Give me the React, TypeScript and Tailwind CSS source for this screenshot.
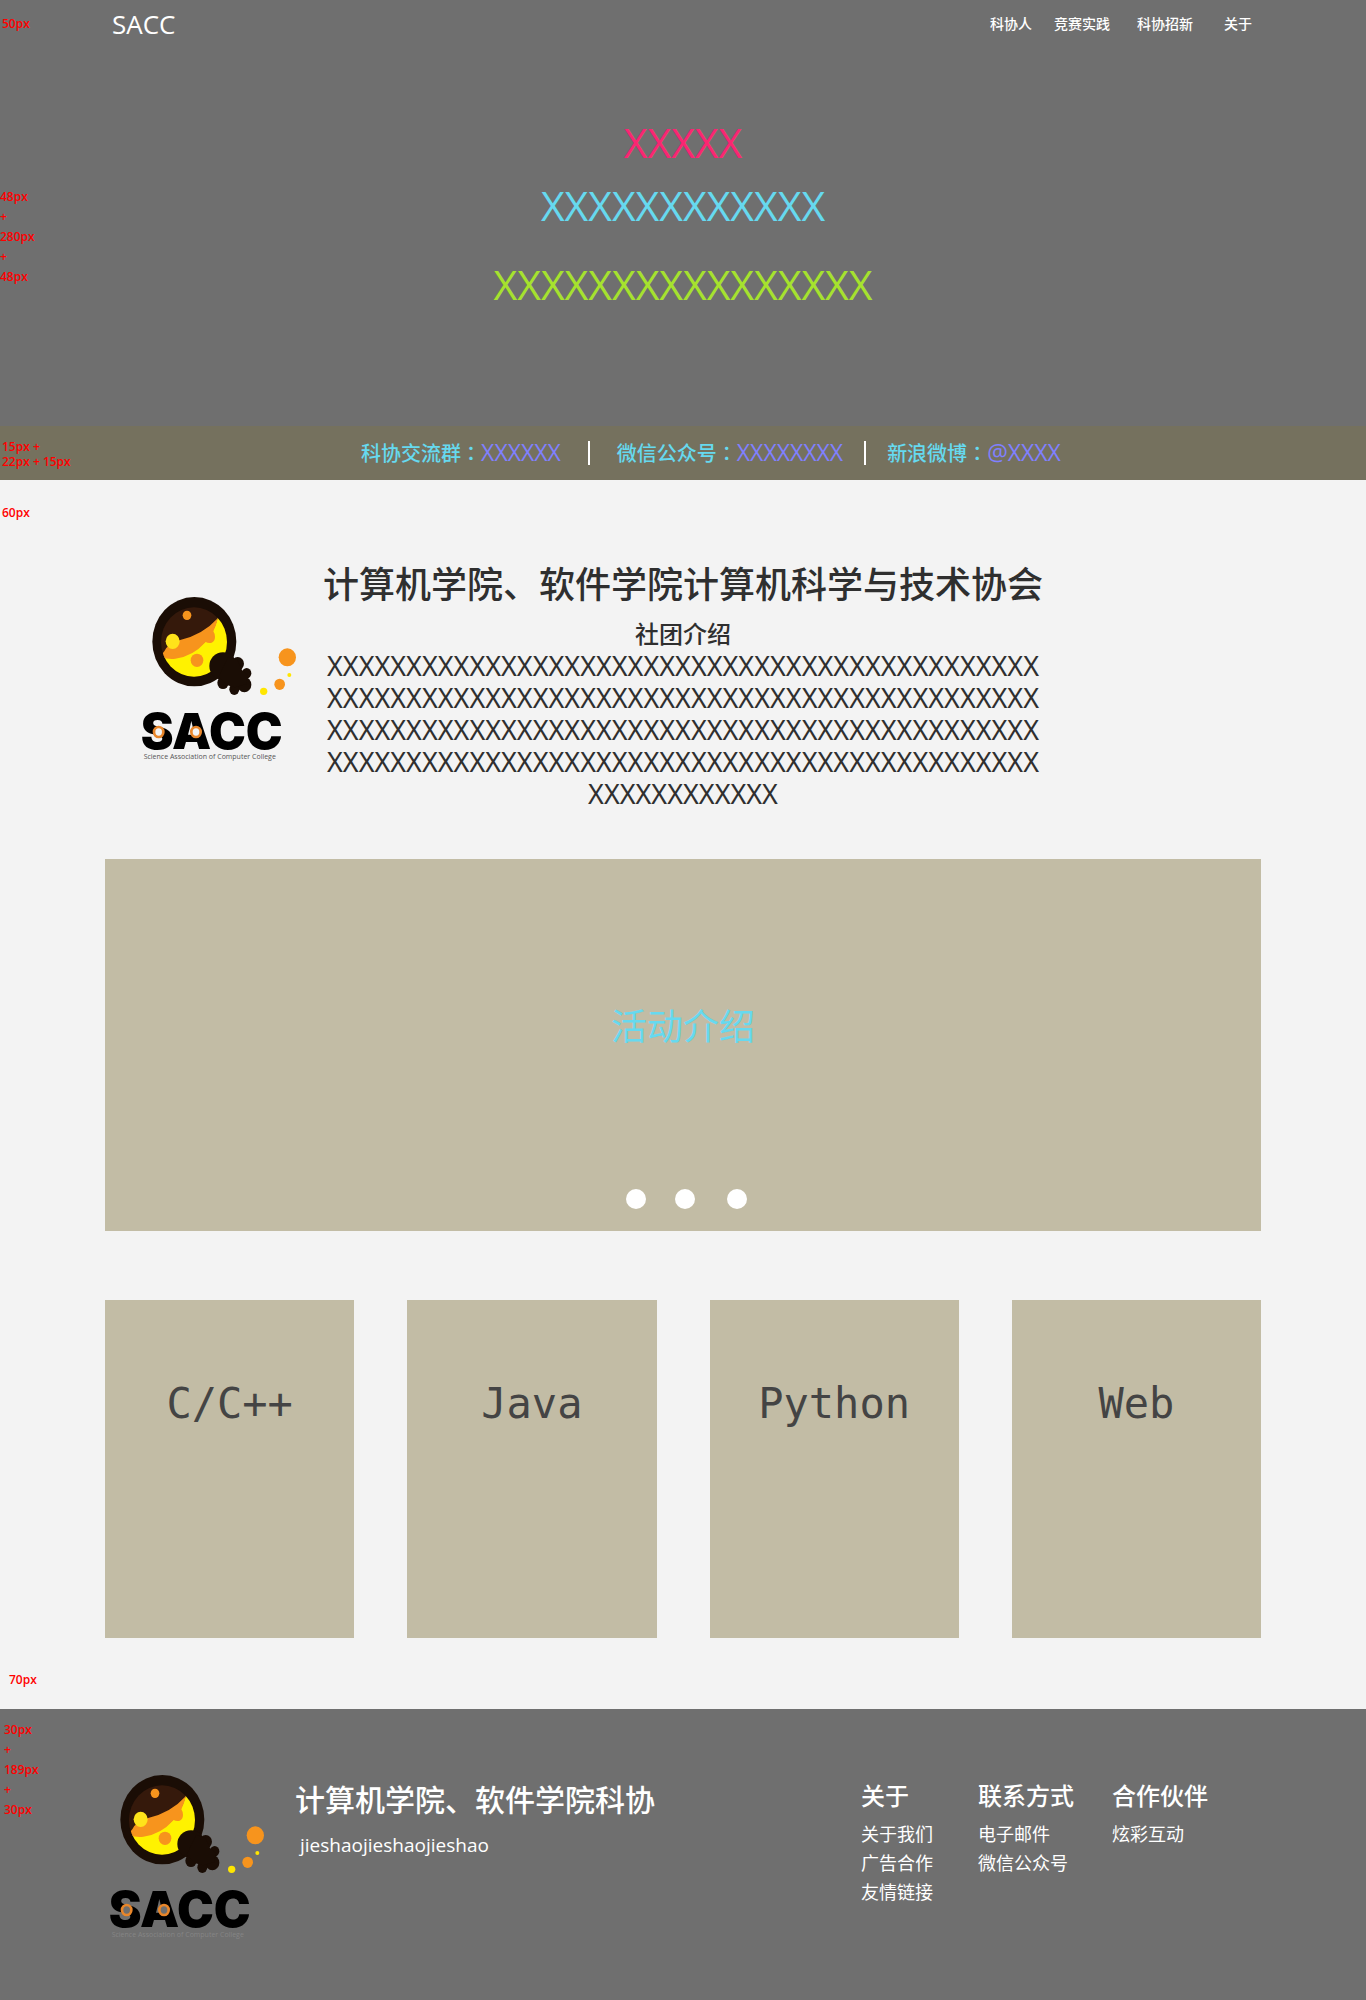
import type { ReactNode } from "react";

const navLinks = [
  { label: "科协人", gap: "" },
  { label: "竞赛实践", gap: "ml-[22px]" },
  { label: "科协招新", gap: "ml-[27px]" },
  { label: "关于", gap: "ml-[31px]" },
];

const languages = ["C/C++", "Java", "Python", "Web"];

const footerColumns = [
  { title: "关于", links: ["关于我们", "广告合作", "友情链接"], gap: "mr-[45px]" },
  { title: "联系方式", links: ["电子邮件", "微信公众号"], gap: "mr-[38px]" },
  { title: "合作伙伴", links: ["炫彩互动"], gap: "" },
];

/* Red spacing annotation laid over the left edge of a section. */
function Note({ place, children }: { place: string; children: ReactNode }) {
  return (
    <div className={`absolute text-[12px] font-semibold whitespace-pre text-[#ff0000] ${place}`}>
      {children}
    </div>
  );
}

function Logo({
  id,
  className,
  tagline,
  hole,
}: {
  id: string;
  className: string;
  tagline: string;
  hole: string;
}) {
  return (
    <svg viewBox="60 105 474 504" className={`h-[168px] w-[158px] shrink-0 ${className}`} role="img" aria-label="SACC">
      <defs>
        <clipPath id={id}>
          <ellipse cx="222" cy="246" rx="99" ry="104" />
        </clipPath>
      </defs>
      <ellipse cx="223" cy="245" rx="126" ry="134" fill="#1a0d05" />
      <g clipPath={`url(#${id})`}>
        <rect x="120" y="140" width="210" height="215" fill="#35190b" />
        <path d="M293 175 L340 175 V360 H120 V290 H166 Q218 285 258 243 Q280 220 293 175 Z" fill="#fff200" />
        <path
          d="M294 174 Q248 225 178 241 Q140 256 134 272 L120 290 Q145 299 166 296 Q218 290 257 246 Q266 251 275 248 Q285 243 285 230 Q285 222 280 214 Q289 196 294 174 Z"
          fill="#f7941d"
        />
      </g>
      <ellipse cx="201" cy="166" rx="13" ry="14" fill="#f7941d" />
      <ellipse cx="158" cy="244" rx="21" ry="23" fill="#ffe31a" />
      <ellipse cx="231" cy="301" rx="19" ry="20" fill="#f7941d" />
      <g fill="#1a0d05">
        <ellipse cx="309" cy="318" rx="41" ry="41" />
        <ellipse cx="353" cy="311" rx="19" ry="20" />
        <ellipse cx="380" cy="340" rx="14" ry="16" />
        <ellipse cx="373" cy="374" rx="21" ry="23" />
        <ellipse cx="343" cy="388" rx="15" ry="17" />
        <ellipse cx="309" cy="368" rx="17" ry="19" />
        <path d="M325 290 L352 300 L366 330 L382 345 L380 372 L345 382 L322 376 L296 350 Z" />
      </g>
      <ellipse cx="502" cy="292" rx="26" ry="27" fill="#f7941d" />
      <circle cx="508" cy="345" r="6" fill="#ffe600" />
      <ellipse cx="479" cy="373" rx="16" ry="17" fill="#f7941d" />
      <circle cx="431" cy="394" r="11" fill="#ffe600" />
      <text x="62" y="567" fill="#000" className="font-['Inter',sans-serif] text-[148px] font-black">
        SACC
      </text>
      <g stroke="#e8862a" strokeWidth="8" className={hole}>
        <ellipse cx="116" cy="516" rx="14" ry="15" />
        <ellipse cx="228" cy="516" rx="14" ry="15" />
      </g>
      <text x="71" y="597" className={`font-['Open_Sans',sans-serif] text-[21px] ${tagline}`}>
        Science Association of Computer College
      </text>
    </svg>
  );
}

function Contact({ label, value }: { label: string; value: string }) {
  return (
    <div className="flex items-baseline leading-[28px] font-medium">
      <span className="text-[20px] text-[#66d9ef]">
        {label}
        <span className="font-['Noto_Sans_CJK_TC',sans-serif]">：</span>
      </span>
      <span className="text-[23px] text-[#8080ff]">{value}</span>
    </div>
  );
}

export default function App() {
  return (
    <div className="min-h-screen bg-[#f3f3f3] font-['Open_Sans','Noto_Sans_CJK_SC',sans-serif]">
      <header className="relative bg-[#6f6f6f] pb-[118px]">
        <Note place="left-[2px] top-[14px] leading-[20px]">50px</Note>
        <Note place="left-0 top-[187px] leading-[20px]">{"48px\n+\n280px\n+\n48px"}</Note>
        <div className="mx-auto flex h-[48px] max-w-[1156px] items-center justify-between pr-[9px] pl-[7px] text-white">
          <a href="#top" className="text-[26px] leading-[36px] font-medium">
            SACC
          </a>
          <nav className="flex text-[14px] leading-[20px] font-medium">
            {navLinks.map((link) => (
              <a key={link.label} href="#top" className={link.gap}>
                {link.label}
              </a>
            ))}
          </nav>
        </div>
        <div className="pt-[70px] text-center text-[41px] leading-[48px] font-medium">
          <p className="text-[#f92672]">XXXXX</p>
          <p className="mt-[15px] text-[#66d9ef]">XXXXXXXXXXXX</p>
          <p className="mt-[31px] text-[#a6e22e]">XXXXXXXXXXXXXXXX</p>
        </div>
      </header>

      <section className="relative bg-[#75715e]">
        <Note place="left-[2px] top-[13px] leading-[15px]">{"15px +\n22px + 15px"}</Note>
        <div className="flex h-[54px] items-center justify-center pl-[56px]">
          <Contact label="科协交流群" value="XXXXXX" />
          <span className="mx-[27px] h-[24px] w-[2px] bg-white" />
          <Contact label="微信公众号" value="XXXXXXXX" />
          <span className="mx-[21px] h-[24px] w-[2px] bg-white" />
          <Contact label="新浪微博" value="@XXXX" />
        </div>
      </section>

      <main className="relative pb-[71px]">
        <Note place="left-[2px] top-[23px] leading-[20px]">60px</Note>
        <Note place="bottom-[19px] left-[9px] leading-[20px]">70px</Note>
        <div className="mx-auto max-w-[1156px]">
          <section className="grid grid-cols-[1fr_720px_1fr] pb-[49px]">
            <Logo id="bulb-intro" className="mt-[115px] ml-[35px]" tagline="fill-[#555555]" hole="fill-[#f3f3f3]" />
            <div className="pt-[81px] text-center text-[#2f2f2f]">
              <h1 className="text-[36px] leading-[48px] font-medium whitespace-nowrap">
                计算机学院、软件学院计算机科学与技术协会
              </h1>
              <h2 className="mt-[9px] text-[24px] leading-[32px] font-medium">社团介绍</h2>
              <p className="font-['Noto_Sans',sans-serif] text-[27px] leading-[32px] break-all">
                {"X".repeat(192)}
              </p>
            </div>
          </section>

          <section className="bg-[#c2bca5] pt-[144px] pb-[22px]">
            <h2 className="text-center text-[36px] leading-[48px] text-[#66d9ef]">活动介绍</h2>
            <div className="mt-[138px] flex justify-center pl-[7px]">
              <button aria-label="1" className="size-[20px] rounded-full bg-white" />
              <button aria-label="2" className="ml-[29px] size-[20px] rounded-full bg-white" />
              <button aria-label="3" className="ml-[32px] size-[20px] rounded-full bg-white" />
            </div>
          </section>

          <section className="mt-[69px] grid grid-cols-4 gap-[53px]">
            {languages.map((name) => (
              <article key={name} className="min-h-[338px] bg-[#c2bca5] pt-[76px] text-center">
                <h3 className="font-['DejaVu_Sans_Mono',monospace] text-[42px] leading-[56px] text-[#444444]">
                  {name}
                </h3>
              </article>
            ))}
          </section>
        </div>
      </main>

      <footer className="relative bg-[#6f6f6f] pb-[59px] text-white">
        <Note place="left-[4px] top-[11px] leading-[20px]">{"30px\n+\n189px\n+\n30px"}</Note>
        <div className="mx-auto flex max-w-[1156px] justify-between pt-[64px] pr-[53px] pl-[3px]">
          <div className="flex">
            <Logo id="bulb-footer" className="" tagline="fill-[#858585]" hole="fill-[#6f6f6f]" />
            <div className="ml-[29px] pt-[3px]">
              <p className="text-[30px] leading-[48px] font-medium">计算机学院、软件学院科协</p>
              <p className="mt-[7px] ml-[5px] text-[19px] leading-[28px]">jieshaojieshaojieshao</p>
            </div>
          </div>
          <div className="flex pt-[5px]">
            {footerColumns.map((column) => (
              <div key={column.title} className={column.gap}>
                <h4 className="text-[24px] leading-[36px] font-medium">{column.title}</h4>
                <ul className="mt-[6px] text-[18px] leading-[29px]">
                  {column.links.map((link) => (
                    <li key={link}>
                      <a href="#top">{link}</a>
                    </li>
                  ))}
                </ul>
              </div>
            ))}
          </div>
        </div>
      </footer>
    </div>
  );
}
